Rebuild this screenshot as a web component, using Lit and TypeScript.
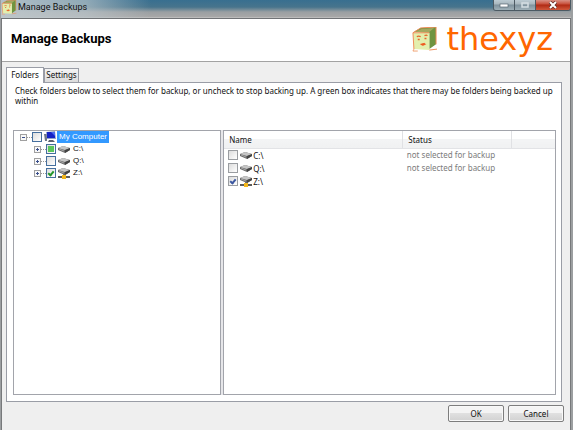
import { LitElement, html, css, svg } from "lit";
import { customElement, state } from "lit/decorators.js";

type Drive = { name: string; network: boolean; tree: "partial" | "off" | "on"; status: string };

const cube = html`<svg class="cube" viewBox="0 0 28 26" aria-hidden="true">
  <path d="M3 5 L10 1 L26 0 L26 18 L19 23 L19 6 Z" fill="#6f9440" />
  <path d="M4 5 L11 2 L24 1 L18 6 Z" fill="#a3a860" />
  <path d="M2 6 L19 6 L19 24 L3 23 Z" fill="#e3efae" />
  <path d="M2 6 L10 1 L26 0 M2 6 L3 23 M2 6 L19 6 M26 0 L26 18 M19 24 L27 23" fill="none" stroke="#ef8a55" stroke-width="1" />
  <path d="M6 10 q2 -1 4 0 M14 9 q2 -1 3 0 M7 13 h2 M14 12 h2" fill="none" stroke="#e8642c" stroke-width="1.4" />
  <path d="M10 18 q2 2 5 0 l-1 -1 z" fill="#ee5a20" stroke="#ee5a20" />
  <path d="M3 23 l-1 2 h5" fill="none" stroke="#f0a070" />
</svg>`;

const monitor = html`<svg class="ico" viewBox="0 0 12 12" aria-hidden="true">
  <path d="M0 3 h3 v7 h-2 z" fill="#6e7686" />
  <path d="M2 1 L11 0 L12 8 L3 8 Z" fill="#8fa0c8" />
  <path d="M3 1 L11 1 L11 7 L3 7 Z" fill="#1522c4" />
  <path d="M7 1 L11 1 L11 5 Z" fill="#4b6cf0" />
  <path d="M5 9 h4 l2 2 h-7 z" fill="#59606e" />
</svg>`;

const driveIcon = (network: boolean) => html`<svg class="ico" viewBox="0 0 12 12" aria-hidden="true">
  <g transform=${network ? "translate(0 -2)" : "translate(0 0)"}>
    <path d="M0 5 L5 3 L12 5 L12 7 L7 10 L0 7 Z" fill="#6a6a6a" />
    <path d="M0 5 L5 3 L12 5 L7 7 Z" fill="#c6c6c6" />
    <path d="M7 7 L12 5 L12 7 L7 10 Z" fill="#444" />
    <path d="M1 6 L6 8" stroke="#a5a5a5" stroke-width="1" />
  </g>
  ${network
    ? svg`<path d="M0 10 h12" stroke="#5c5c5c" stroke-width="2" /><path d="M6 7 v3" stroke="#555" stroke-width="1.5" /><rect x="4" y="8" width="4" height="4" fill="#f3b71c" />`
    : ""}
</svg>`;

@customElement("app-root")
export class AppRoot extends LitElement {
  @state() private drives: Drive[] = [
    { name: "C:\\", network: false, tree: "partial", status: "not selected for backup" },
    { name: "Q:\\", network: false, tree: "off", status: "not selected for backup" },
    { name: "Z:\\", network: true, tree: "on", status: "" },
  ];

  static styles = css`
    :host {
      display: flex;
      flex-direction: column;
      min-height: 100vh;
      box-sizing: border-box;
      border: solid #9c9fa1;
      border-width: 0 2px 0 1px;
      background: #efefef;
      color: #111;
      font: 8px/10px "Noto Sans", "Liberation Sans", sans-serif;
    }
    * { box-sizing: border-box; }
    button, input { margin: 0; padding: 0; font: inherit; color: inherit; }
    svg { display: block; flex: none; }

    .titlebar {
      display: flex;
      align-items: flex-start;
      justify-content: space-between;
      height: 19px;
      border-bottom: 1px solid #707376;
      background:
        linear-gradient(90deg, rgb(190 200 205 / 0.9) 0, rgb(190 200 205 / 0.65) 85px, transparent 150px),
        linear-gradient(#386f90 0, #47748c 7px, #9a9fa2 12px, #a8a8a8 17px, #cfcfcf 18px);
    }
    .caption {
      display: flex;
      align-items: flex-start;
      gap: 1px;
      font: 9px/15px Roboto, "Liberation Sans", sans-serif;
    }
    .caption .cube { width: 16px; height: 15px; }
    .winbtns {
      display: flex;
      height: 11px;
      border: 1px solid #4c5a63;
      border-top: 0;
      border-radius: 0 0 3px 3px;
      overflow: hidden;
    }
    .winbtns button {
      display: flex;
      align-items: center;
      justify-content: center;
      width: 21px;
      border: 0;
      border-right: 1px solid #4c5a63;
      background: linear-gradient(#bccbd3, #a9b7be 4px, #7f929d 5px, #9fb0b8);
    }
    .winbtns .close { width: 34px; border: 0; background: linear-gradient(#d99186, #c8503c 4px, #b02a14 5px, #d0583c); }
    .winbtns svg { width: 10px; height: 8px; }

    .client {
      flex: 1;
      display: flex;
      flex-direction: column;
      border: solid #77797b;
      border-width: 0 1px;
    }
    header {
      display: flex;
      align-items: center;
      justify-content: space-between;
      height: 43px;
      padding: 0 17px 2px 9px;
      background: #fff;
      border-bottom: 1px solid #a2a2a2;
    }
    h1 { margin: 0; color: #000; font: bold 13px/20px Roboto, "Liberation Sans", sans-serif; }
    .brand { display: flex; align-items: center; gap: 8px; }
    .brand .cube { width: 27px; height: 25px; }
    .brand span { color: #ff6600; font: 32px/38px "DejaVu Sans", sans-serif; }

    .tabs { display: flex; align-items: flex-end; height: 20px; padding-left: 4px; }
    .tabs button {
      height: 14px;
      width: 35px;
      padding-bottom: 2px;
      border: 1px solid #9a9da6;
      border-bottom: 0;
      background: linear-gradient(#f4f4f4, #dcdcdc);
      white-space: nowrap;
    }
    .tabs .active {
      position: relative;
      width: 38px;
      height: 16px;
      margin-bottom: -1px;
      background: #fff;
    }
    .panel {
      flex: 1;
      display: flex;
      flex-direction: column;
      margin: 0 8px 0 4px;
      padding: 3px 5px 6px 6px;
      border: 1px solid #9a9da6;
      background: #fff;
    }
    .hint { margin: 0; height: 44px; padding: 0 2px; }
    .split { flex: 1; display: grid; grid-template-columns: 209fr 334fr; gap: 2px; background: #e6e6e9; }
    .pane { border: 1px solid #a2a4ab; background: #fff; }

    ul { margin: 0; padding: 0; list-style: none; }
    .tree { padding-left: 6px; font-family: "Liberation Sans", sans-serif; }
    .tree ul { padding-left: 14px; }
    .node { display: flex; align-items: center; height: 12px; }
    .expand {
      display: flex;
      width: 7px;
      height: 7px;
      border: 1px solid #a0a0a0;
      background: #f8f8f8;
    }
    .expand svg { width: 5px; height: 5px; }
    .dots { width: 5px; height: 1px; border-top: 1px dotted #999; }
    input[type="checkbox"] {
      appearance: none;
      flex: none;
      display: grid;
      place-items: center;
      width: 10px;
      height: 10px;
      border: 1px solid #456f9e;
      background: linear-gradient(135deg, #dcdcdc, #fff);
    }
    input.partial::after { content: ""; width: 6px; height: 6px; background: #5bc75b; }
    input:checked::after {
      content: "";
      width: 2px;
      height: 4px;
      border: solid #22962a;
      border-width: 0 2px 2px 0;
      transform: rotate(40deg);
    }
    .ico { width: 12px; height: 12px; }
    .node .ico { margin-left: 2px; }
    .node label { padding: 0 2px; margin-left: 1px; line-height: 12px; }
    .root label { color: #fff; background: #3399ff; white-space: nowrap; }

    table { width: 100%; table-layout: fixed; border-collapse: collapse; }
    .c-name { width: 54%; }
    .c-status { width: 33%; }
    th {
      height: 17px;
      padding: 2px 5px 0;
      border-right: 1px solid #e0e1e4;
      border-bottom: 1px solid #e2e3e6;
      background: linear-gradient(#fff 45%, #f3f4f5 50%, #f0f1f2);
      text-align: left;
      font-weight: normal;
    }
    th:last-child { border-right: 0; }
    td { height: 13px; padding: 0 4px; color: #7c7c7c; }
    .file { display: flex; align-items: center; gap: 2px; height: 13px; color: #111; }
    .file input { border-color: #9a9da1; }
    .file input:checked::after { border-color: #3c57a0; }
    .file label { display: flex; align-items: center; gap: 1px; line-height: 13px; }

    footer { display: flex; justify-content: flex-end; gap: 4px; padding: 3px 6px 8px; }
    footer button {
      width: 56px;
      height: 17px;
      border: 1px solid #7d7d7d;
      border-radius: 2px;
      background: linear-gradient(#f4f4f4 45%, #e0e0e0 50%, #d2d2d2);
      box-shadow: inset 0 0 0 1px #f8f8f8;
    }
  `;

  private expander(open: boolean, name: string) {
    return html`<button class="expand" aria-label=${`${open ? "Collapse" : "Expand"} ${name}`}>
      <svg viewBox="0 0 5 5" aria-hidden="true">
        <path d=${open ? "M1 2.5 h3" : "M1 2.5 h3 M2.5 1 v3"} stroke="#3a4f8c" />
      </svg></button><span class="dots"></span>`;
  }

  render() {
    return html`
      <div class="titlebar">
        <div class="caption">${cube}<span>Manage Backups</span></div>
        <div class="winbtns">
          <button aria-label="Minimize">
            <svg viewBox="0 0 10 8"><rect x="1" y="3" width="8" height="3" fill="#fff" stroke="#596872" stroke-width=".7" /></svg>
          </button>
          <button aria-label="Maximize" disabled>
            <svg viewBox="0 0 10 8"><rect x="2" y="2" width="6" height="4" fill="none" stroke="#d5dee3" stroke-width="1.5" /></svg>
          </button>
          <button class="close" aria-label="Close">
            <svg viewBox="0 0 10 8">
              <path d="M2 1 L8 7 M8 1 L2 7" stroke="#5c2a26" stroke-width="3.4" />
              <path d="M2 1 L8 7 M8 1 L2 7" stroke="#fff" stroke-width="2" />
            </svg>
          </button>
        </div>
      </div>
      <div class="client">
        <header>
          <h1>Manage Backups</h1>
          <div class="brand">${cube}<span>thexyz</span></div>
        </header>
        <div class="tabs" role="tablist">
          <button class="active" role="tab" aria-selected="true">Folders</button>
          <button role="tab" aria-selected="false">Settings</button>
        </div>
        <div class="panel" role="tabpanel">
          <p class="hint">Check folders below to select them for backup, or uncheck to stop backing up. A green box indicates that there may be folders being backed up within</p>
          <div class="split">
            <ul class="pane tree">
              <li>
                <div class="node root">
                  ${this.expander(true, "My Computer")}
                  <input type="checkbox" id="root" />${monitor}<label for="root">My Computer</label>
                </div>
                <ul>
                  ${this.drives.map(
                    (d, i) => html`<li class="node">
                      ${this.expander(false, d.name)}
                      <input type="checkbox" id="t${i}" class=${d.tree} ?checked=${d.tree === "on"} />${driveIcon(d.network)}<label for="t${i}">${d.name}</label>
                    </li>`
                  )}
                </ul>
              </li>
            </ul>
            <div class="pane">
              <table>
                <colgroup><col class="c-name" /><col class="c-status" /><col /></colgroup>
                <thead><tr><th>Name</th><th>Status</th><th></th></tr></thead>
                <tbody>
                  ${this.drives.map(
                    (d, i) => html`<tr>
                      <td><div class="file">
                        <input type="checkbox" id="f${i}" ?checked=${d.tree === "on"} />
                        <label for="f${i}">${driveIcon(d.network)}${d.name}</label>
                      </div></td>
                      <td>${d.status}</td><td></td>
                    </tr>`
                  )}
                </tbody>
              </table>
            </div>
          </div>
        </div>
        <footer><button>OK</button><button>Cancel</button></footer>
      </div>
    `;
  }
}
